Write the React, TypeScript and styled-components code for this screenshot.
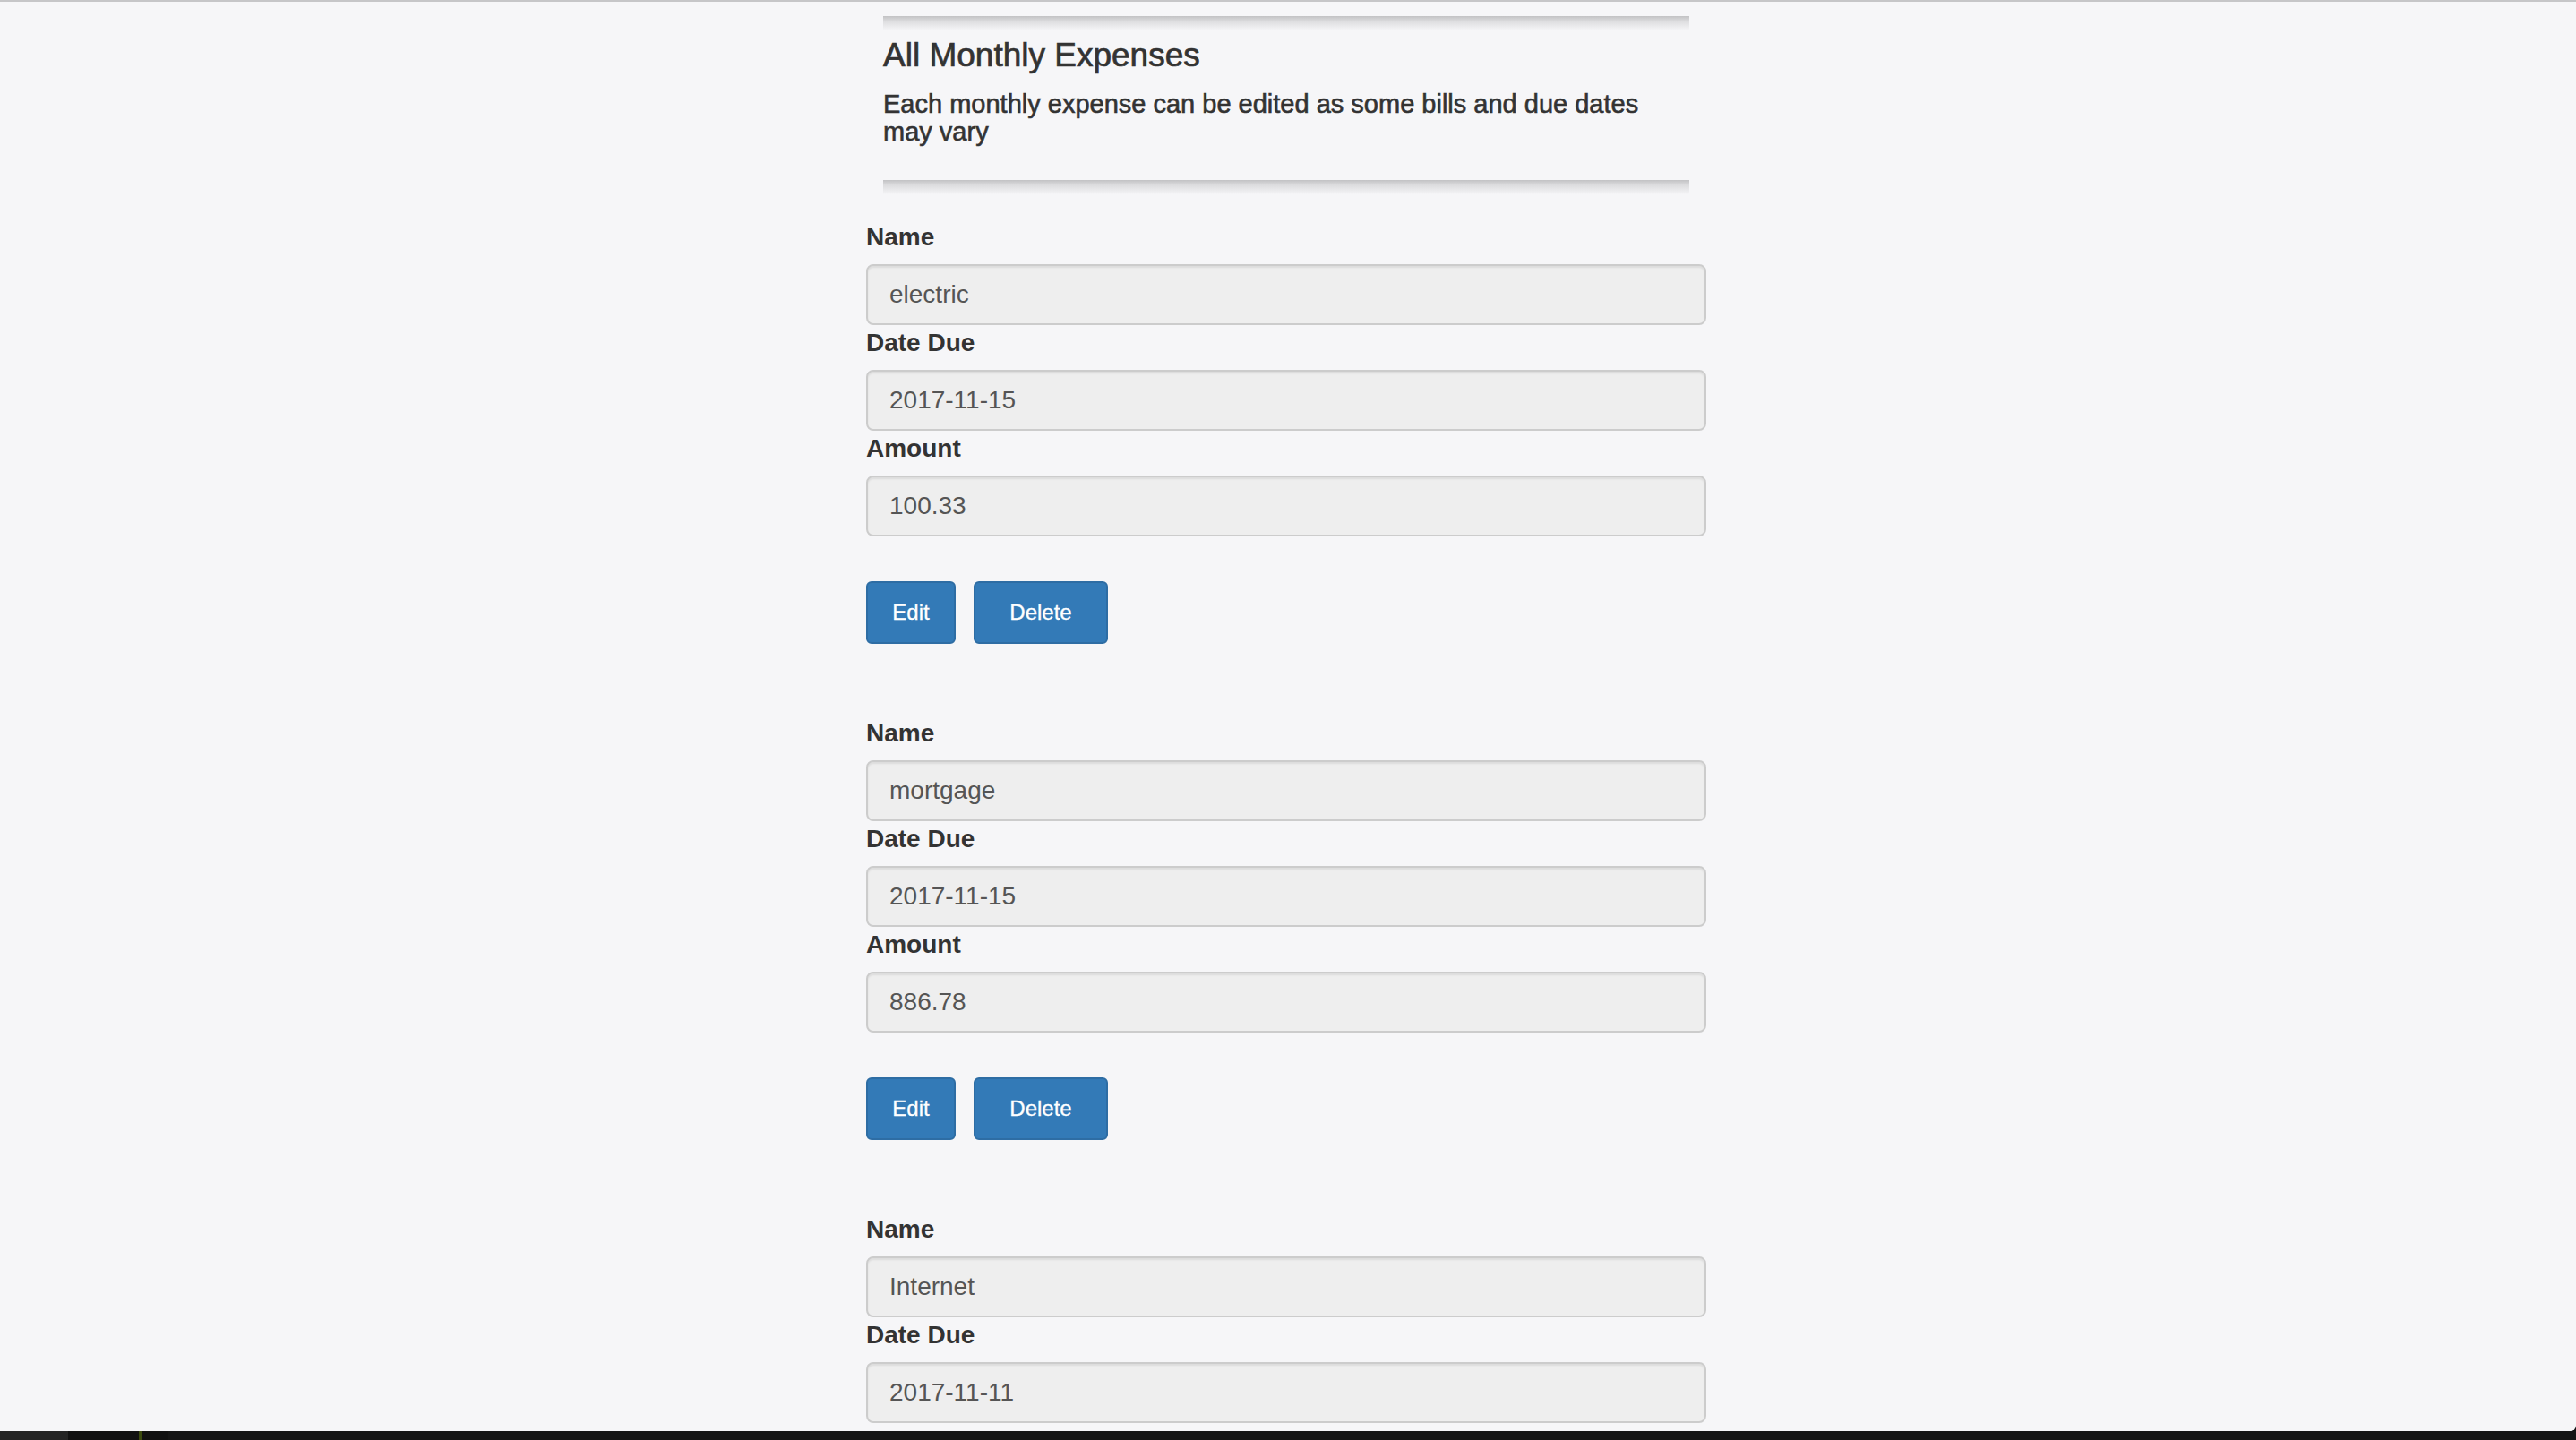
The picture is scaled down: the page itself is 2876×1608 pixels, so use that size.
import React from "react";
import styled, { createGlobalStyle } from "styled-components";

const GlobalStyle = createGlobalStyle`
  html, body {
    margin: 0;
    padding: 0;
    height: 100%;
  }
  body {
    background: #111111;
    font-family: "Liberation Sans", Arial, sans-serif;
    overflow: hidden;
  }
  #root {
    height: 100%;
  }
`;

const Screen = styled.div`
  height: 100vh;
  display: flex;
  flex-direction: column;
`;

const Page = styled.main`
  flex: 1;
  min-height: 0;
  overflow: hidden;
  background: #f6f6f8;
  border-top: 2px solid #c6c6c8;
  border-bottom-right-radius: 6px;
  display: flex;
  flex-direction: column;
  align-items: center;
  padding: 16px 4px 0 0;
`;

const Header = styled.header`
  width: 900px;
  display: flex;
  flex-direction: column;
`;

const ShadowRule = styled.div`
  height: 16px;
  background: linear-gradient(to bottom, #c2c2c4 0%, #dcdcde 35%, #f6f6f8 100%);
`;

const Title = styled.h4`
  margin: 8px 0 0;
  font-size: 37px;
  line-height: 40px;
  font-weight: 400;
  color: #333333;
  -webkit-text-stroke: 0.7px #333333;
`;

const Subtitle = styled.h5`
  margin: 19px 0 38px;
  font-size: 29px;
  line-height: 31px;
  font-weight: 400;
  color: #333333;
  -webkit-text-stroke: 0.6px #333333;
`;

const Form = styled.section`
  width: 938px;
  margin-top: 28px;
  display: flex;
  flex-direction: column;
`;

const Expense = styled.div`
  display: flex;
  flex-direction: column;
  margin-bottom: 80px;
`;

const Field = styled.div`
  display: flex;
  flex-direction: column;
`;

const Label = styled.label`
  font-size: 28px;
  line-height: 40px;
  font-weight: 700;
  color: #333333;
  margin-bottom: 10px;
`;

const Input = styled.input`
  box-sizing: border-box;
  width: 100%;
  height: 68px;
  padding: 0 24px;
  font-family: "Liberation Sans", Arial, sans-serif;
  font-size: 28px;
  color: #555555;
  background: #eeeeee;
  border: 2px solid #cccccc;
  border-radius: 8px;
  box-shadow: inset 0 2px 2px rgba(0, 0, 0, 0.075);
  outline: none;
`;

const Actions = styled.div`
  display: flex;
  gap: 20px;
  margin-top: 50px;
`;

const Button = styled.button<{ $width: number }>`
  box-sizing: border-box;
  width: ${(p) => p.$width}px;
  height: 70px;
  padding: 0;
  font-family: "Liberation Sans", Arial, sans-serif;
  font-size: 24px;
  color: #ffffff;
  background: #337ab7;
  border: 2px solid #2e6da4;
  border-radius: 6px;
  cursor: pointer;
  -webkit-text-stroke: 0.3px #ffffff;
`;

const Taskbar = styled.footer`
  height: 10px;
  flex: none;
  display: flex;
  background: #121212;
`;

const TaskSegment = styled.div<{ $w: number; $bg: string }>`
  width: ${(p) => p.$w}px;
  background: ${(p) => p.$bg};
`;

type ExpenseItem = { name: string; due: string; amount: string };

const expenses: ExpenseItem[] = [
  { name: "electric", due: "2017-11-15", amount: "100.33" },
  { name: "mortgage", due: "2017-11-15", amount: "886.78" },
  { name: "Internet", due: "2017-11-11", amount: "59.99" },
];

function ExpenseCard({ item }: { item: ExpenseItem }) {
  return (
    <Expense>
      <Field>
        <Label>Name</Label>
        <Input readOnly value={item.name} />
      </Field>
      <Field>
        <Label>Date Due</Label>
        <Input readOnly value={item.due} />
      </Field>
      <Field>
        <Label>Amount</Label>
        <Input readOnly value={item.amount} />
      </Field>
      <Actions>
        <Button $width={100}>Edit</Button>
        <Button $width={150}>Delete</Button>
      </Actions>
    </Expense>
  );
}

export default function App() {
  return (
    <>
      <GlobalStyle />
      <Screen>
        <Page>
          <Header>
            <ShadowRule />
            <Title>All Monthly Expenses</Title>
            <Subtitle>
              Each monthly expense can be edited as some bills and due dates may vary
            </Subtitle>
            <ShadowRule />
          </Header>
          <Form>
            {expenses.map((e) => (
              <ExpenseCard key={e.name} item={e} />
            ))}
          </Form>
        </Page>
        <Taskbar>
          <TaskSegment $w={76} $bg="#242424" />
          <TaskSegment $w={79} $bg="#111111" />
          <TaskSegment $w={4} $bg="#3b4a0e" />
          <TaskSegment $w={29} $bg="#111111" />
          <TaskSegment $w={2688} $bg="#151515" />
        </Taskbar>
      </Screen>
    </>
  );
}
